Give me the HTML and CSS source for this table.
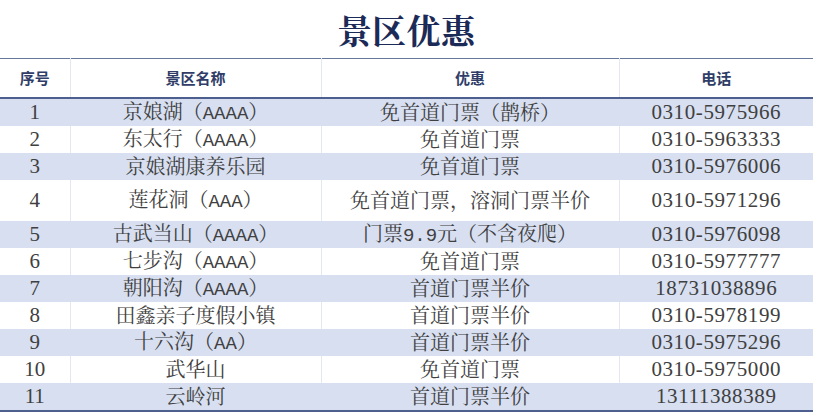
FILE: index.html
```html
<!DOCTYPE html>
<html lang="zh-CN">
<head>
<meta charset="utf-8">
<title>景区优惠</title>
<link rel="stylesheet" href="styles.css">
</head>
<body>
<div class="page">
  <h1 class="title">景区优惠</h1>
  <table class="deals">
    <colgroup>
      <col class="c-no"><col class="c-name"><col class="c-offer"><col class="c-tel">
    </colgroup>
    <thead>
      <tr><th>序号</th><th>景区名称</th><th>优惠</th><th>电话</th></tr>
    </thead>
    <tbody>
      <tr class="alt"><td class="num">1</td><td>京娘湖（<span class="lat">AAAA</span>）</td><td>免首道门票（鹊桥）</td><td class="num tel">0310-5975966</td></tr>
      <tr><td class="num">2</td><td>东太行（<span class="lat">AAAA</span>）</td><td>免首道门票</td><td class="num tel">0310-5963333</td></tr>
      <tr class="alt"><td class="num">3</td><td>京娘湖康养乐园</td><td>免首道门票</td><td class="num tel">0310-5976006</td></tr>
      <tr class="tall"><td class="num">4</td><td>莲花洞（<span class="lat">AAA</span>）</td><td>免首道门票，溶洞门票半价</td><td class="num tel">0310-5971296</td></tr>
      <tr class="alt"><td class="num">5</td><td>古武当山（<span class="lat">AAAA</span>）</td><td>门票<span class="lat">9.9</span>元（不含夜爬）</td><td class="num tel">0310-5976098</td></tr>
      <tr><td class="num">6</td><td>七步沟（<span class="lat">AAAA</span>）</td><td>免首道门票</td><td class="num tel">0310-5977777</td></tr>
      <tr class="alt"><td class="num">7</td><td>朝阳沟（<span class="lat">AAAA</span>）</td><td>首道门票半价</td><td class="num tel">18731038896</td></tr>
      <tr><td class="num">8</td><td>田鑫亲子度假小镇</td><td>首道门票半价</td><td class="num tel">0310-5978199</td></tr>
      <tr class="alt"><td class="num">9</td><td>十六沟（<span class="lat">AA</span>）</td><td>首道门票半价</td><td class="num tel">0310-5975296</td></tr>
      <tr><td class="num">10</td><td>武华山</td><td>免首道门票</td><td class="num tel">0310-5975000</td></tr>
      <tr class="alt"><td class="num">11</td><td>云岭河</td><td>首道门票半价</td><td class="num tel">13111388389</td></tr>
    </tbody>
  </table>
</div>
</body>
</html>
```
FILE: styles.css
```css
html, body {
  margin: 0;
  padding: 0;
  background: #ffffff;
}

.page {
  width: 813px;
}

.title {
  margin: 0;
  height: 58px;
  display: flex;
  align-items: center;
  justify-content: center;
  padding-top: 1px;
  box-sizing: border-box;
  font-family: "Noto Serif CJK SC", "Noto Sans CJK SC", serif;
  font-size: 34px;
  font-weight: 700;
  color: #1b2a57;
  letter-spacing: 0.5px;
}

.deals {
  width: 813px;
  border-collapse: collapse;
  table-layout: fixed;
  font-family: "Noto Serif CJK SC", "Noto Sans CJK SC", serif;
  color: #404040;
}

.c-no { width: 70px; }
.c-name { width: 251px; }
.c-offer { width: 298px; }
.c-tel { width: 194px; }

.deals thead tr {
  height: 39px;
  border-top: 1px solid #66779c;
  border-bottom: 2px solid #4d5f8e;
}

.deals th {
  font-family: "Noto Sans CJK SC", sans-serif;
  font-size: 15px;
  font-weight: 700;
  color: #2f3d68;
  padding: 0;
  line-height: 1;
  border-left: 1px solid #e3e7ef;
}

.deals td {
  height: 27px;
  padding: 0;
  text-align: center;
  vertical-align: middle;
  font-size: 20px;
  line-height: 1;
  white-space: nowrap;
  border-left: 1px solid #e3e7ef;
}

.deals th:first-child,
.deals td:first-child {
  border-left: none;
}

.deals tr.alt td {
  background: #d7dff0;
  border-left-color: #d7dff0;
}

.deals tr.tall td {
  height: 41px;
}

.deals tbody tr:last-child {
  border-bottom: 2px solid #4d5f8e;
}

.deals td.num {
  font-family: "Liberation Serif", serif;
  font-size: 21px;
}

.deals td.tel {
  letter-spacing: 0.6px;
}

.lat {
  font-family: "Liberation Mono", monospace;
  font-size: 19px;
}
```
